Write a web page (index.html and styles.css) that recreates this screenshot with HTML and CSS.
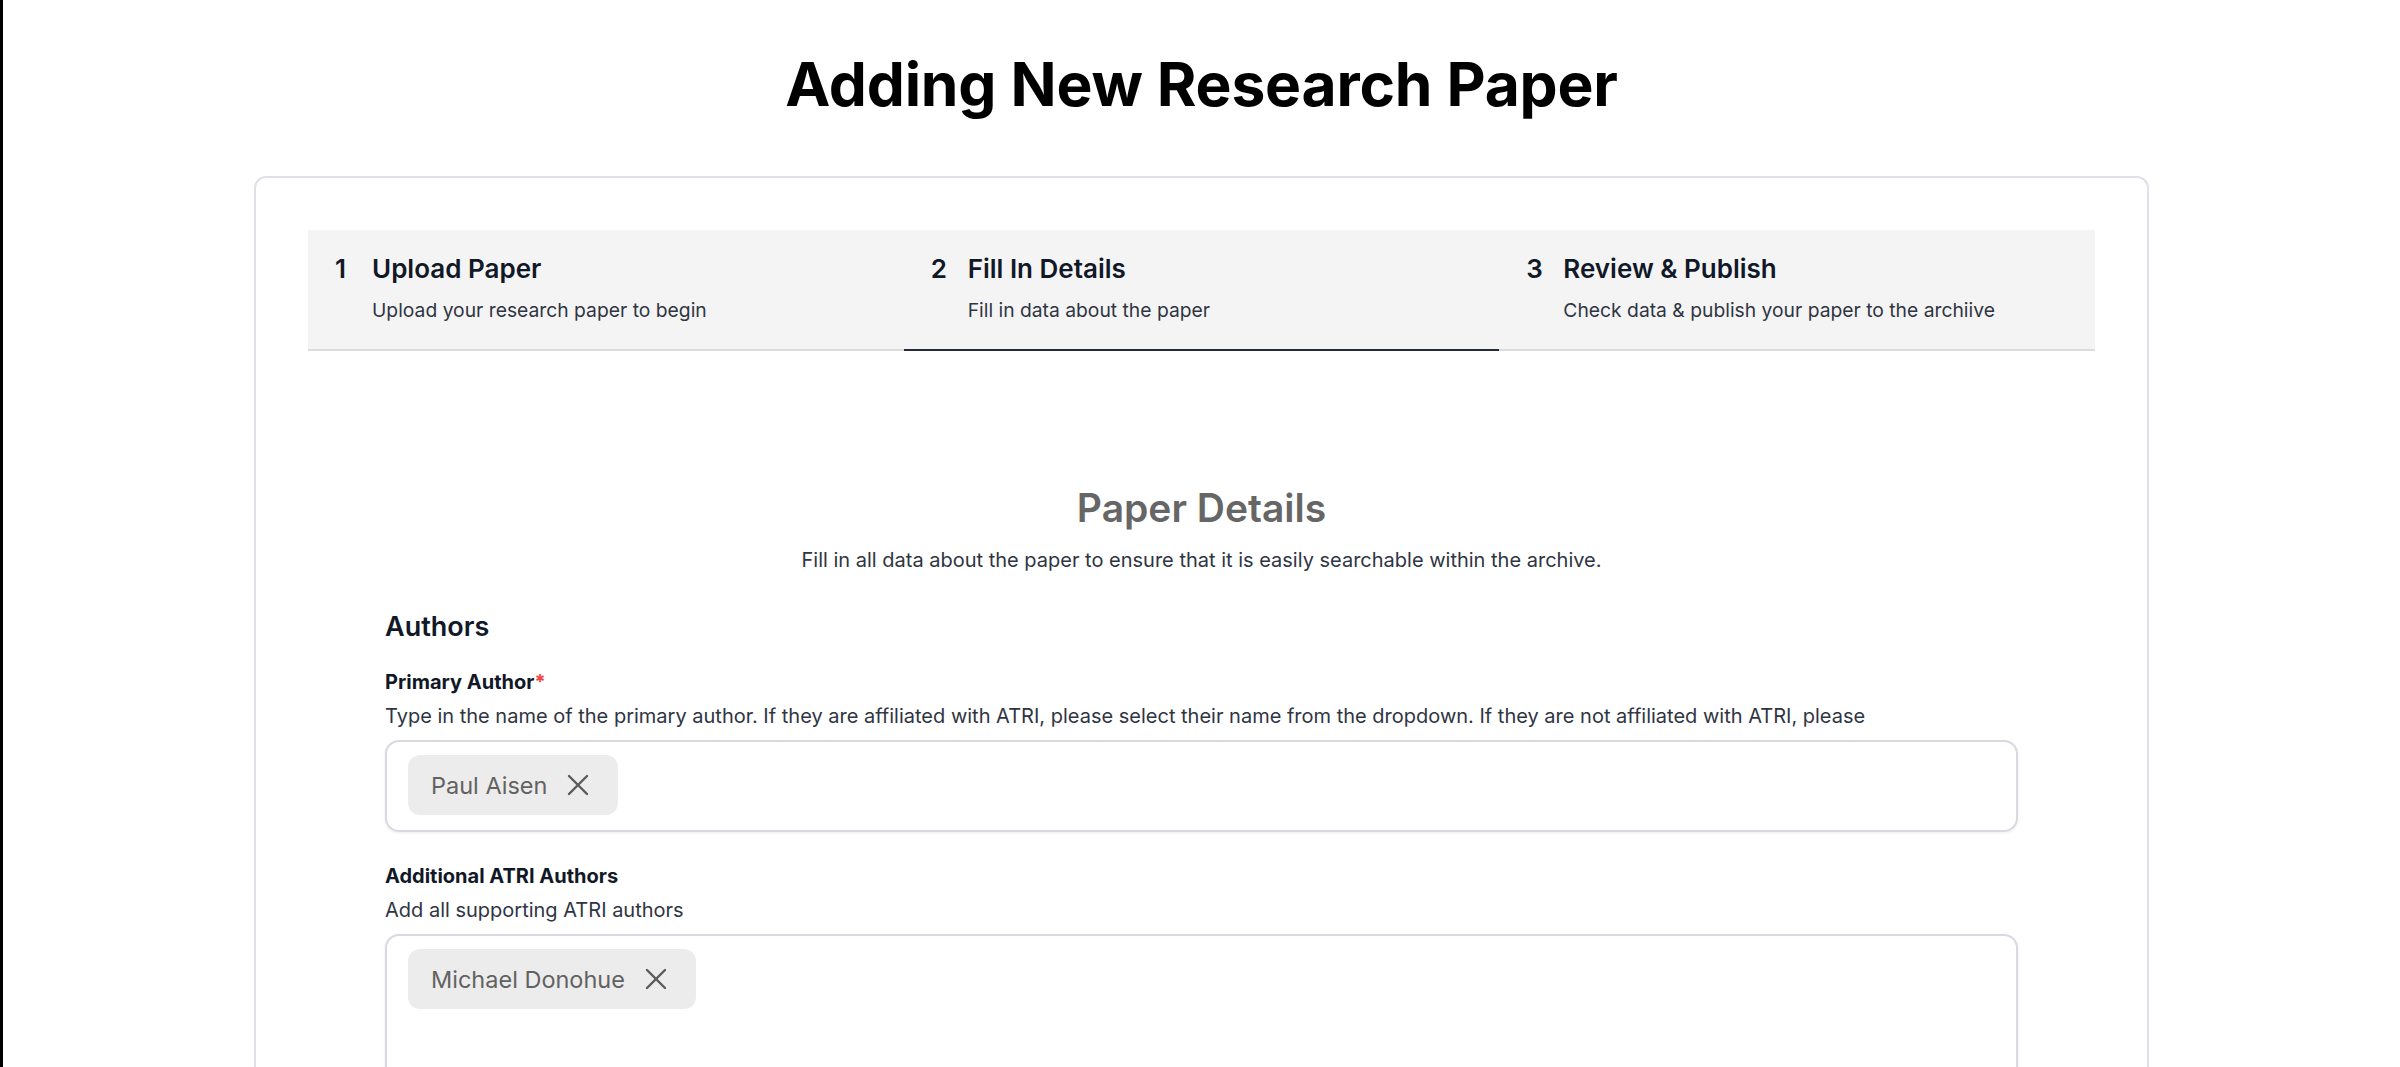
FILE: index.html
```html
<!DOCTYPE html>
<html lang="en">
<head>
<meta charset="utf-8">
<title>Adding New Research Paper</title>
<link rel="stylesheet" href="styles.css">
</head>
<body>
<div class="page">
  <h1 class="page-title">Adding New Research Paper</h1>
  <div class="card">
    <div class="stepper">
      <div class="step">
        <span class="step-num">1</span>
        <div class="step-text">
          <div class="step-title">Upload Paper</div>
          <div class="step-sub">Upload your research paper to begin</div>
        </div>
      </div>
      <div class="step active">
        <span class="step-num">2</span>
        <div class="step-text">
          <div class="step-title">Fill In Details</div>
          <div class="step-sub">Fill in data about the paper</div>
        </div>
      </div>
      <div class="step">
        <span class="step-num">3</span>
        <div class="step-text">
          <div class="step-title">Review &amp; Publish</div>
          <div class="step-sub">Check data &amp; publish your paper to the archiive</div>
        </div>
      </div>
    </div>

    <div class="form">
      <h2 class="form-title">Paper Details</h2>
      <p class="form-sub">Fill in all data about the paper to ensure that it is easily searchable within the archive.</p>

      <h3 class="section-title">Authors</h3>

      <div class="field">
        <div class="label">Primary Author<span class="req">*</span></div>
        <div class="desc">Type in the name of the primary author. If they are affiliated with ATRI, please select their name from the dropdown. If they are not affiliated with ATRI, please</div>
        <div class="tag-input">
          <span class="chip">Paul Aisen
            <svg class="chip-x" viewBox="0 0 22 22" width="22" height="22"><path d="M2 2L20 20M20 2L2 20" fill="none" stroke="currentColor" stroke-width="2.4" stroke-linecap="round"/></svg>
          </span>
        </div>
      </div>

      <div class="field">
        <div class="label">Additional ATRI Authors</div>
        <div class="desc">Add all supporting ATRI authors</div>
        <div class="tag-input tall">
          <span class="chip">Michael Donohue
            <svg class="chip-x" viewBox="0 0 22 22" width="22" height="22"><path d="M2 2L20 20M20 2L2 20" fill="none" stroke="currentColor" stroke-width="2.4" stroke-linecap="round"/></svg>
          </span>
        </div>
      </div>
    </div>
  </div>
</div>
</body>
</html>
```
FILE: styles.css
```css
html, body {
  margin: 0;
  padding: 0;
  background: #ffffff;
}
body {
  font-family: Inter, "Noto Sans", "Liberation Sans", sans-serif;
  color: #111827;
}
.page {
  border-left: 3px solid #000;
  min-height: 1067px;
  box-sizing: border-box;
  padding-top: 49px;
  display: flex;
  flex-direction: column;
  align-items: center;
}
.page-title {
  margin: 0;
  font-size: 60.5px;
  line-height: 70px;
  font-weight: 700;
  color: #000;
  letter-spacing: -0.2px;
}
.card {
  margin-top: 57px;
  width: 1895px;
  box-sizing: border-box;
  border: 2px solid #e0e1e6;
  border-radius: 12px;
  padding: 52px;
}
.stepper {
  display: grid;
  grid-template-columns: 1fr 1fr 1fr;
  background: #f4f4f4;
}
.step {
  display: flex;
  gap: 19px;
  padding: 23px 28px 27px 27px;
  border-bottom: 2px solid #dcdcdc;
}
.step.active {
  border-bottom: 2px solid #262b38;
}
.step-num, .step-title {
  font-size: 26px;
  line-height: 32px;
  font-weight: 600;
  color: #111827;
}
.step-num {
  width: 18px;
  flex: none;
}
.step-sub {
  margin-top: 13px;
  font-size: 19.3px;
  line-height: 24px;
  color: #2f3543;
}
.form {
  padding: 134px 77px 0;
}
.form-title {
  margin: 0;
  text-align: center;
  font-size: 39px;
  line-height: 46px;
  font-weight: 600;
  color: #666666;
}
.form-sub {
  margin: 17px 0 0;
  text-align: center;
  font-size: 20px;
  line-height: 24px;
  color: #2f3543;
}
.section-title {
  margin: 39px 0 0;
  font-size: 27px;
  line-height: 32px;
  font-weight: 600;
  color: #111827;
}
.field {
  margin-top: 27px;
}
.field + .field {
  margin-top: 32px;
}
.label {
  font-size: 20px;
  line-height: 24px;
  font-weight: 700;
  color: #111827;
}
.req {
  color: #ef4444;
}
.desc {
  margin-top: 10px;
  font-size: 20px;
  line-height: 24px;
  color: #2f3543;
}
.tag-input {
  margin-top: 12px;
  border: 2px solid #d7dae2;
  border-radius: 14px;
  box-shadow: 0 1px 3px rgba(16, 24, 40, 0.08);
  padding: 13px 21px 15px;
  display: flex;
  flex-wrap: wrap;
  align-items: flex-start;
  gap: 12px;
  min-height: 60px;
}
.tag-input.tall {
  min-height: 220px;
}
.chip {
  display: inline-flex;
  align-items: center;
  gap: 20px;
  height: 60px;
  box-sizing: border-box;
  padding: 0 29px 0 23px;
  background: #ececec;
  border-radius: 12px;
  font-size: 23.5px;
  color: #626262;
}
.chip-x {
  width: 22px;
  height: 22px;
  color: #5a5a5a;
}
```
